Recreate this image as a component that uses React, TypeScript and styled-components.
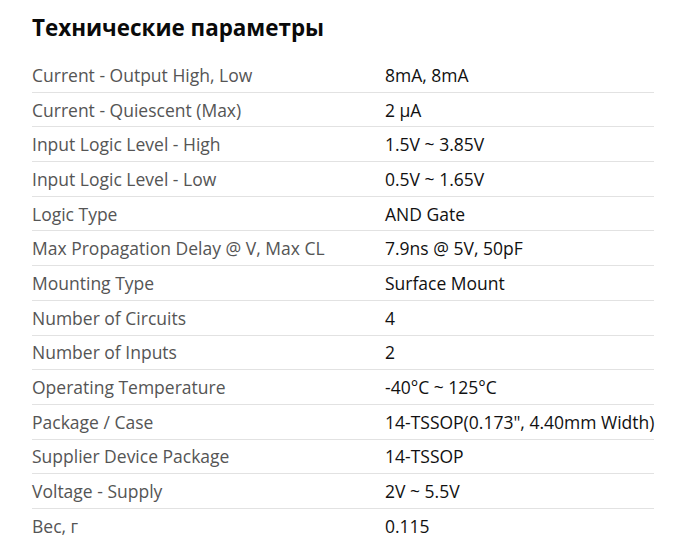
import React from 'react';
import styled, { createGlobalStyle } from 'styled-components';

const GlobalStyle = createGlobalStyle`
  html, body {
    margin: 0;
    padding: 0;
    background: #ffffff;
  }
  body {
    font-family: "Open Sans", "Noto Sans", sans-serif;
  }
`;

const Container = styled.section`
  padding: 13px 37px 0 32px;
  width: 691px;
  box-sizing: border-box;
`;

const Title = styled.h2`
  margin: 0 0 15px 0;
  font-size: 22.4px;
  line-height: 30px;
  font-weight: 700;
  color: #0a0a0a;
`;

const Table = styled.div`
  display: flex;
  flex-direction: column;
`;

const Row = styled.div<{ last?: boolean }>`
  display: grid;
  grid-template-columns: 353px 1fr;
  align-items: center;
  height: 34.7px;
  box-sizing: border-box;
  border-bottom: ${(props) => (props.last ? 'none' : '1px solid #e2e2e2')};
  font-size: 17.5px;
`;

const Label = styled.div`
  color: #555555;
  white-space: nowrap;
`;

const Value = styled.div`
  color: #111111;
  white-space: nowrap;
`;

const specs: [string, string][] = [
  ['Current - Output High, Low', '8mA, 8mA'],
  ['Current - Quiescent (Max)', '2 µA'],
  ['Input Logic Level - High', '1.5V ~ 3.85V'],
  ['Input Logic Level - Low', '0.5V ~ 1.65V'],
  ['Logic Type', 'AND Gate'],
  ['Max Propagation Delay @ V, Max CL', '7.9ns @ 5V, 50pF'],
  ['Mounting Type', 'Surface Mount'],
  ['Number of Circuits', '4'],
  ['Number of Inputs', '2'],
  ['Operating Temperature', '-40°C ~ 125°C'],
  ['Package / Case', '14-TSSOP(0.173", 4.40mm Width)'],
  ['Supplier Device Package', '14-TSSOP'],
  ['Voltage - Supply', '2V ~ 5.5V'],
  ['Вес, г', '0.115'],
];

const App: React.FC = () => {
  return (
    <>
      <GlobalStyle />
      <Container>
        <Title>Технические параметры</Title>
        <Table>
          {specs.map(([label, value], i) => (
            <Row key={label} last={i === specs.length - 1}>
              <Label>{label}</Label>
              <Value>{value}</Value>
            </Row>
          ))}
        </Table>
      </Container>
    </>
  );
};

export default App;
